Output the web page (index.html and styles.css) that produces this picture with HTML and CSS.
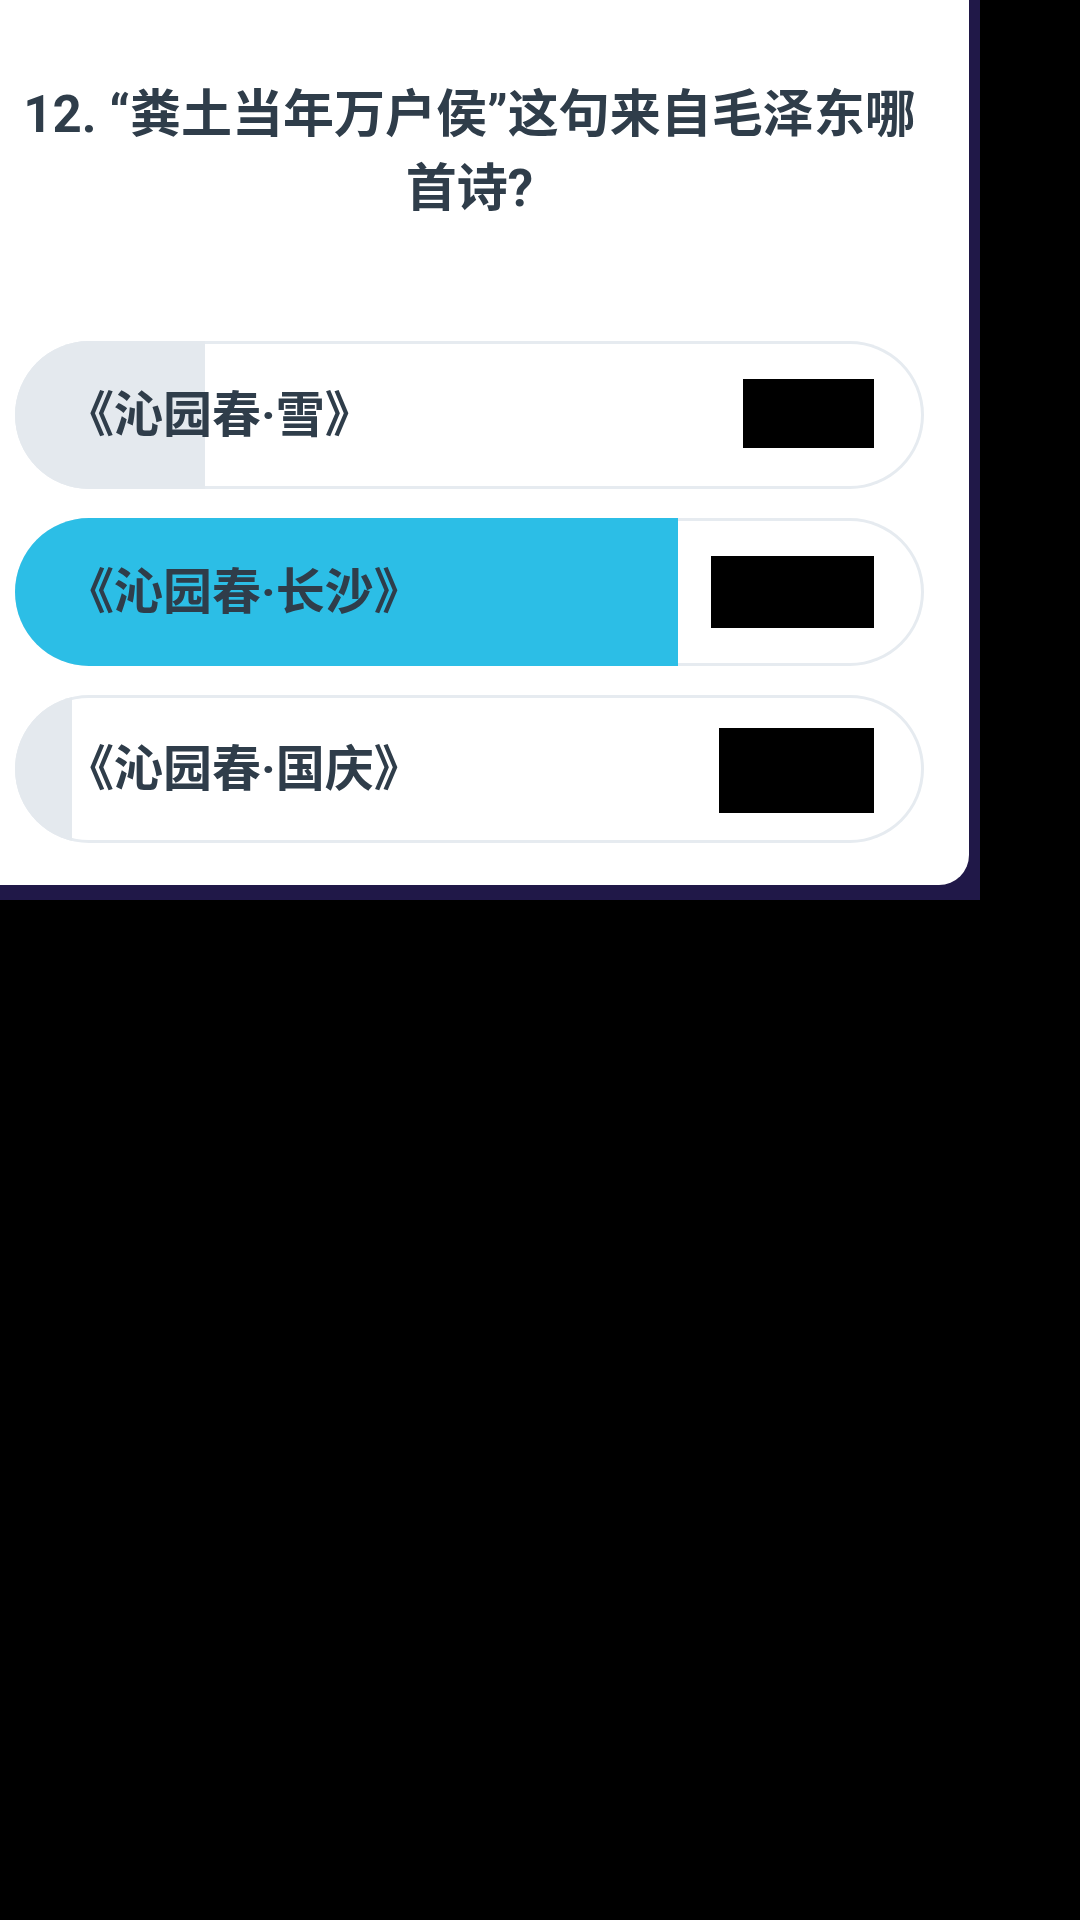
FILE: index.html
```html
<!DOCTYPE html>
<html lang="zh">
<head>
<meta charset="utf-8">
<title>Quiz</title>
<link rel="stylesheet" href="styles.css">
</head>
<body>
<div class="frame">
  <div class="card">
    <h1 class="question">12. “粪土当年万户侯”这句来自毛泽东哪首诗?</h1>
    <div class="options">
      <div class="option">
        <div class="fill fill-gray" style="width:20.9%"></div>
        <span class="label">《沁园春·雪》</span>
        <span class="redact redact-a"></span>
      </div>
      <div class="option">
        <div class="fill fill-blue" style="width:72.9%"></div>
        <span class="label">《沁园春·长沙》</span>
        <span class="redact redact-b"></span>
      </div>
      <div class="option">
        <div class="fill fill-gray" style="width:6.3%"></div>
        <span class="label">《沁园春·国庆》</span>
        <span class="redact redact-c"></span>
      </div>
    </div>
  </div>
</div>
</body>
</html>
```
FILE: styles.css
```css
html, body {
  margin: 0;
  padding: 0;
  background: #000;
}
body {
  width: 1080px;
  height: 1920px;
  font-family: Roboto, "Noto Sans CJK SC", sans-serif;
}
.frame {
  width: 980px;
  height: 900px;
  background: #201848;
  padding: 0 11px 15px 0;
  box-sizing: border-box;
}
.card {
  height: 885px;
  background: #fff;
  border-bottom-right-radius: 30px;
  padding: 78px 40px 42px 10px;
  box-sizing: border-box;
  display: flex;
  flex-direction: column;
}
.question {
  margin: 0;
  font-size: 51px;
  line-height: 74px;
  font-weight: 700;
  color: #2f3d4a;
  text-align: center;
  height: 148px;
}
.options {
  margin: 115px 5px 0 5px;
  display: flex;
  flex-direction: column;
  gap: 29px;
}
.option {
  position: relative;
  height: 148px;
  border-radius: 74px;
  overflow: hidden;
  box-shadow: inset 0 0 0 3px #e6ebf0;
  display: flex;
  align-items: center;
  justify-content: space-between;
  padding: 0 50px 0 50px;
  box-sizing: border-box;
}
.fill {
  position: absolute;
  left: 0;
  top: 0;
  bottom: 0;
}
.fill-gray { background: #e4e9ee; }
.fill-blue { background: #2cbee6; }
.label {
  position: relative;
  font-size: 49px;
  font-weight: 700;
  color: #2f3d4a;
  line-height: 1;
}
.redact {
  position: relative;
  background: #000;
  display: block;
}
.redact-a { width: 131px; height: 69px; margin-top: -3px; }
.redact-b { width: 163px; height: 72px; }
.redact-c { width: 155px; height: 85px; margin-top: 3px; }
```
